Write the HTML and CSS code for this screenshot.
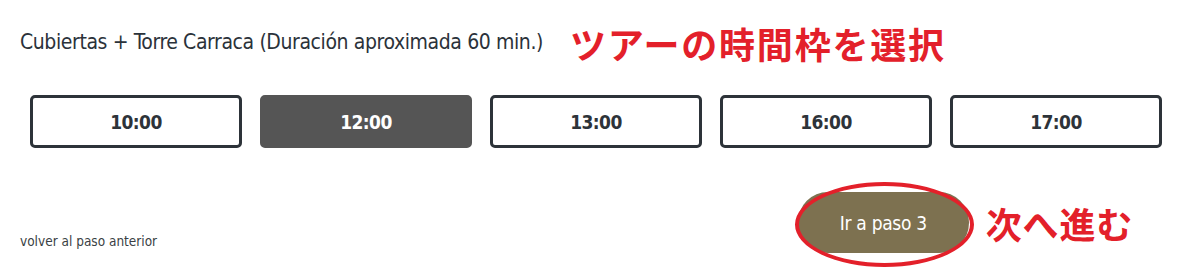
FILE: index.html
```html
<!DOCTYPE html>
<html lang="es">

<head>
    <meta charset="UTF-8">
    <meta name="viewport" content="width=device-width, initial-scale=1.0">
    <title>Reserva - paso 2</title>
    <link rel="stylesheet" href="styles.css">
</head>

<body>
    <div class="step">
        <div class="step-header">
            <h2 class="tour-title">Cubiertas + Torre Carraca (Duración aproximada 60 min.)</h2>
            <span class="note note-title">ツアーの時間枠を選択</span>
        </div>

        <div class="slots">
            <button class="slot">10:00</button>
            <button class="slot selected">12:00</button>
            <button class="slot">13:00</button>
            <button class="slot">16:00</button>
            <button class="slot">17:00</button>
        </div>

        <div class="step-footer">
            <a href="#" class="back-link">volver al paso anterior</a>
            <div class="next-area">
                <div class="next-wrap">
                    <button class="next-btn">Ir a paso 3</button>
                    <span class="note-ring"></span>
                </div>
                <span class="note note-next">次へ進む</span>
            </div>
        </div>
    </div>
</body>

</html>
```

FILE: styles.css
```css
body {
    margin: 0;
    background-color: #ffffff;
    font-family: "DejaVu Sans Condensed", "Liberation Sans", sans-serif;
    color: #2b323a;
}

.step {
    width: 1200px;
    height: 279px;
    padding: 0 20px;
    box-sizing: border-box;
}

.step-header {
    display: flex;
    align-items: center;
    gap: 27px;
    height: 90px;
}

.tour-title {
    margin: 0;
    font-size: 21px;
    font-weight: normal;
    letter-spacing: -0.4px;
    padding-bottom: 6px;
}

.note {
    font-family: "Noto Sans CJK JP", sans-serif;
    font-weight: bold;
    color: #e3202a;
    font-size: 36px;
    line-height: 1;
}

.note-title {
    letter-spacing: 1.8px;
    padding-bottom: 4px;
}

.note-next {
    letter-spacing: 0.8px;
}

.slots {
    display: flex;
    gap: 18px;
    padding-left: 10px;
    margin-top: 5px;
}

.slot {
    width: 212px;
    height: 53px;
    border: 3px solid #2d3339;
    border-radius: 5px;
    background-color: #ffffff;
    color: #2d3339;
    font-family: inherit;
    font-size: 19px;
    font-weight: bold;
    letter-spacing: -0.6px;
    cursor: pointer;
}

.slot.selected {
    background-color: #555555;
    border-color: #555555;
    color: #ffffff;
}

.step-footer {
    display: flex;
    justify-content: space-between;
    align-items: center;
    margin-top: 44px;
}

.back-link {
    align-self: flex-end;
    margin-bottom: 4px;
    font-size: 13.5px;
    color: #3a3f44;
    text-decoration: none;
}

.next-area {
    display: flex;
    align-items: center;
    gap: 17px;
    margin-right: 47px;
}

.next-wrap {
    position: relative;
}

.next-btn {
    width: 171px;
    height: 61px;
    border: none;
    border-radius: 30px;
    background-color: #7d7150;
    color: #ffffff;
    font-family: inherit;
    font-size: 19px;
    letter-spacing: -0.3px;
    cursor: pointer;
}

.note-ring {
    position: absolute;
    left: -3px;
    top: -10px;
    width: 171px;
    height: 77px;
    border: 4px solid #e3202a;
    border-radius: 50%;
}
```
